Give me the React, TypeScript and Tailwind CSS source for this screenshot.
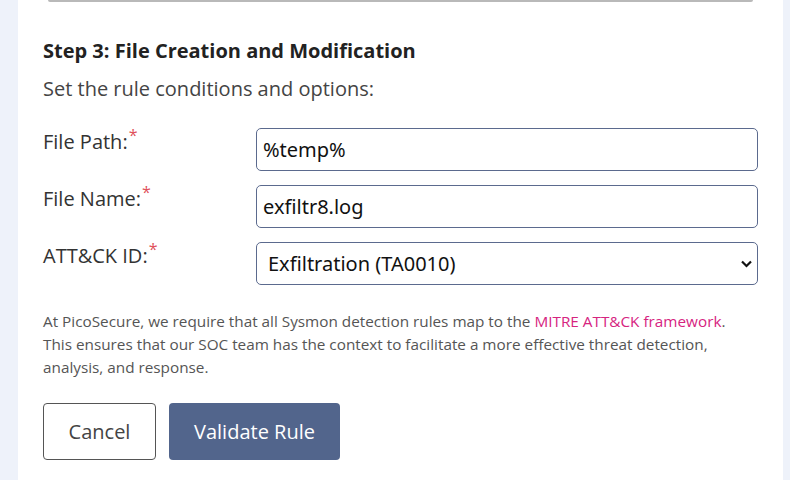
import { useState } from "react";

const FIELDS = [
  { label: "File Path:", value: "%temp%" },
  { label: "File Name:", value: "exfiltr8.log" },
];

function Label({ text }: { text: string }) {
  return (
    <label className="text-[20px] leading-[28px] text-[#333]">
      {text}
      <span className="relative top-[-8px] ml-[1px] text-[16px] text-[#e0505a]">*</span>
    </label>
  );
}

export default function App() {
  const [values, setValues] = useState(FIELDS.map((f) => f.value));
  const [tactic, setTactic] = useState("TA0010");

  return (
    <div className="min-h-screen bg-[#eef2fa] pl-[18px] pr-[7px]" style={{ fontFamily: '"Open Sans", "Noto Sans", sans-serif' }}>
      <div className="h-[480px] bg-white px-[25px]">
        <div className="mx-[5px] h-[2px] rounded-b-[4px] bg-[#b9b9b9]" />

        <h2 className="mt-[35px] text-[20px] leading-[28px] font-bold text-[#222]">
          Step 3: File Creation and Modification
        </h2>
        <p className="mt-[10px] text-[20px] leading-[28px] text-[#444]">
          Set the rule conditions and options:
        </p>

        <div className="mt-[25px] grid grid-cols-[213px_502px] gap-y-[14px]">
          {FIELDS.map((f, i) => (
            <div key={f.label} className="contents">
              <Label text={f.label} />
              <input
                value={values[i]}
                onChange={(e) => setValues(values.map((v, j) => (j === i ? e.target.value : v)))}
                className="h-[43px] rounded-[5px] border border-[#5b6a8e] px-[6px] text-[20px] text-[#111] outline-none"
                style={{ fontFamily: '"Noto Sans", sans-serif' }}
              />
            </div>
          ))}
          <Label text="ATT&CK ID:" />
          <div className="relative">
            <select
              value={tactic}
              onChange={(e) => setTactic(e.target.value)}
              className="h-[43px] w-full appearance-none rounded-[5px] border border-[#5b6a8e] bg-white pl-[11px] text-[20px] text-[#111] outline-none"
              style={{ fontFamily: '"Noto Sans", sans-serif' }}
            >
              <option value="TA0010">Exfiltration (TA0010)</option>
              <option value="TA0011">Command and Control (TA0011)</option>
            </select>
            <svg
              className="pointer-events-none absolute right-[6px] top-[18px]"
              width="11"
              height="8"
              viewBox="0 0 11 8"
              fill="none"
              stroke="#111"
              strokeWidth="2.2"
            >
              <polyline points="1,1.5 5.5,6 10,1.5" />
            </svg>
          </div>
        </div>

        <p className="mt-[25px] text-[15.3px] leading-[23px] text-[#555]">
          At PicoSecure, we require that all Sysmon detection rules map to the{" "}
          <a href="#" className="text-[#d6247f]">MITRE ATT&amp;CK framework</a>.
          <br />
          This ensures that our SOC team has the context to facilitate a more effective threat detection,
          <br />
          analysis, and response.
        </p>

        <div className="mt-[24px] flex gap-[13px]">
          <button className="h-[57px] w-[113px] rounded-[4px] border border-[#555] bg-white text-[20px] text-[#444]">
            Cancel
          </button>
          <button className="h-[57px] w-[171px] rounded-[4px] bg-[#52658c] text-[20px] text-white">
            Validate Rule
          </button>
        </div>
      </div>
    </div>
  );
}
